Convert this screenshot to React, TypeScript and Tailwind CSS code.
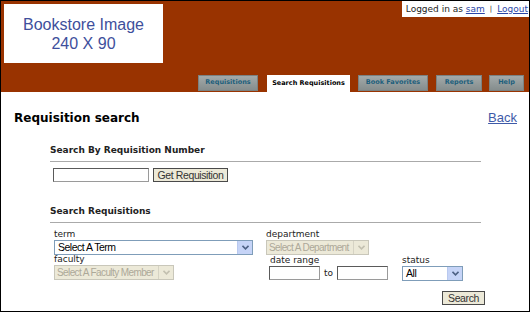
import React from "react";

const tabs = [
  { label: "Requisitions", w: "w-[60px]" },
  { label: "Search Requisitions", w: "w-[83px]", active: true },
  { label: "Book Favorites", w: "w-[70px]" },
  { label: "Reports", w: "w-[46px]" },
  { label: "Help", w: "w-[35px]" },
];

function Arrow({ disabled }: { disabled?: boolean }) {
  return (
    <span
      className={`flex h-full w-[15px] shrink-0 items-center justify-center border-l ${
        disabled ? "border-[#d6d3c4] bg-[#ece9d8]" : "border-[#b9c9ef] bg-[#c6d4f7]"
      }`}
    >
      <svg width="7" height="5" viewBox="0 0 7 5">
        <path d="M0.5 0.8 L3.5 3.8 L6.5 0.8" fill="none" stroke={disabled ? "#c3c0b0" : "#4d6185"} strokeWidth="1.6" />
      </svg>
    </span>
  );
}

function FakeSelect({ text, w, disabled }: { text: string; w: string; disabled?: boolean }) {
  return (
    <div
      className={`flex h-[15px] items-center border ${w} ${
        disabled ? "border-[#c9c7ba] bg-[#ece9d8] text-[#aca899]" : "border-[#7f9db9] bg-white text-black"
      }`}
    >
      <span
        className={`flex-1 overflow-hidden whitespace-nowrap font-['Liberation_Sans',Arial,sans-serif] leading-none ${
          disabled ? "pl-[2px] text-[10px] tracking-[-0.6px]" : "pl-[3px] text-[10.5px] tracking-[-0.5px]"
        }`}
      >
        {text}
      </span>
      <Arrow disabled={disabled} />
    </div>
  );
}

function TextBox({ w }: { w: string }) {
  return <div className={`h-[14px] shrink-0 border border-t-[#5a5a5a] border-l-[#5a5a5a] border-r-[#9a9a9a] border-b-[#9a9a9a] bg-white ${w}`} />;
}

function Btn({ label, w }: { label: string; w: string }) {
  return (
    <div
      className={`flex h-[14px] items-center justify-center whitespace-nowrap border border-[#4a4a4a] bg-[#ece9d8] font-['Liberation_Sans',Arial,sans-serif] text-[10.5px] leading-none tracking-[-0.4px] text-[#333] ${w}`}
    >
      {label}
    </div>
  );
}

export default function App() {
  const label = "font-['DejaVu_Sans',Verdana,sans-serif] text-[9px] leading-[11px] text-[#222]";
  return (
    <div className="flex h-[312px] w-[530px] flex-col overflow-hidden border border-black bg-white">
      {/* header */}
      <div className="flex h-[91px] shrink-0 flex-col bg-[#993300]">
        <div className="flex items-start justify-between">
          <div className="ml-[3px] mt-[3px] flex h-[59px] w-[159px] flex-col items-center justify-center bg-white font-['Liberation_Sans',Arial,sans-serif] text-[16px] leading-[19px] text-[#3e4f9c]">
            <span>Bookstore Image</span>
            <span>240 X 90</span>
          </div>
          <div className="flex h-[16px] items-center gap-[3px] bg-white pl-[4px] pr-[1px] font-['DejaVu_Sans',Verdana,sans-serif] text-[9px] leading-none text-[#222]">
            <span>
              Logged in as <a className="text-[#2b47a8] underline">sam</a>
            </span>
            <span className="px-[2px] text-[7px]">|</span>
            <a className="text-[#2b47a8] underline">Logout</a>
          </div>
        </div>
        <div className="mt-auto flex justify-end pr-[5px]">
          {tabs.map((t, i) => (
            <div
              key={t.label}
              className={`flex h-[16px] items-center justify-center whitespace-nowrap font-['DejaVu_Sans',Verdana,sans-serif] text-[6.5px] font-bold ${t.w} ${
                i > 0 ? (i === 4 ? "ml-[7px]" : i === 1 ? "ml-[9px]" : "ml-[8px]") : ""
              } ${
                t.active
                  ? "h-[17px] bg-white text-black"
                  : "border border-[#7b8282] bg-gradient-to-b from-[#a3aaaa] to-[#858d8d] text-[#1d5f7c]"
              }`}
            >
              {t.label}
            </div>
          ))}
        </div>
      </div>

      {/* content */}
      <div className="flex flex-col">
        <div className="flex items-start justify-between pl-[13px] pr-[12px] pt-[19px]">
          <h1 className="font-['DejaVu_Sans',Verdana,sans-serif] text-[12px] font-bold leading-[14px] text-black">Requisition search</h1>
          <a className="font-['Liberation_Sans',Arial,sans-serif] text-[13px] leading-[14px] text-[#3e5aa8] underline">Back</a>
        </div>

        <div className="ml-[49px] w-[431px]">
          <div className="mt-[19px] border-b border-[#aaaaaa] pb-[5px] font-['DejaVu_Sans',Verdana,sans-serif] text-[9px] font-bold leading-[12px] text-[#222]">
            Search By Requisition Number
          </div>
          <div className="mt-[6px] flex items-center gap-[4px] pl-[3px]">
            <TextBox w="w-[96px]" />
            <Btn label="Get Requisition" w="w-[75px]" />
          </div>

          <div className="mt-[23px] border-b border-[#aaaaaa] pb-[5px] font-['DejaVu_Sans',Verdana,sans-serif] text-[9px] font-bold leading-[12px] text-[#222]">
            Search Requisitions
          </div>

          <div className="mt-[6px] flex pl-[4px]">
            <div className="flex w-[212px] flex-col">
              <span className={label}>term</span>
              <FakeSelect text="Select A Term" w="w-[199px]" />
              <span className={`${label} mt-[-1px]`}>faculty</span>
              <FakeSelect text="Select A Faculty Member" w="w-[120px]" disabled />
            </div>
            <div className="flex flex-col">
              <span className={label}>department</span>
              <FakeSelect text="Select A Department" w="w-[103px]" disabled />
              <div className="flex gap-[14px]">
                <div className="flex flex-col pl-[3px]">
                  <span className={`${label} pl-[1px]`}>date range</span>
                  <div className="flex items-center gap-[4px]">
                    <TextBox w="w-[51px]" />
                    <span className={label}>to</span>
                    <TextBox w="w-[51px]" />
                  </div>
                </div>
                <div className="flex flex-col">
                  <span className={label}>status</span>
                  <FakeSelect text="All" w="w-[61px]" />
                </div>
              </div>
            </div>
          </div>

          <div className="mt-[10px] flex justify-end">
            <div className="mr-[-4px]">
              <Btn label="Search" w="w-[43px]" />
            </div>
          </div>
        </div>
      </div>
    </div>
  );
}
